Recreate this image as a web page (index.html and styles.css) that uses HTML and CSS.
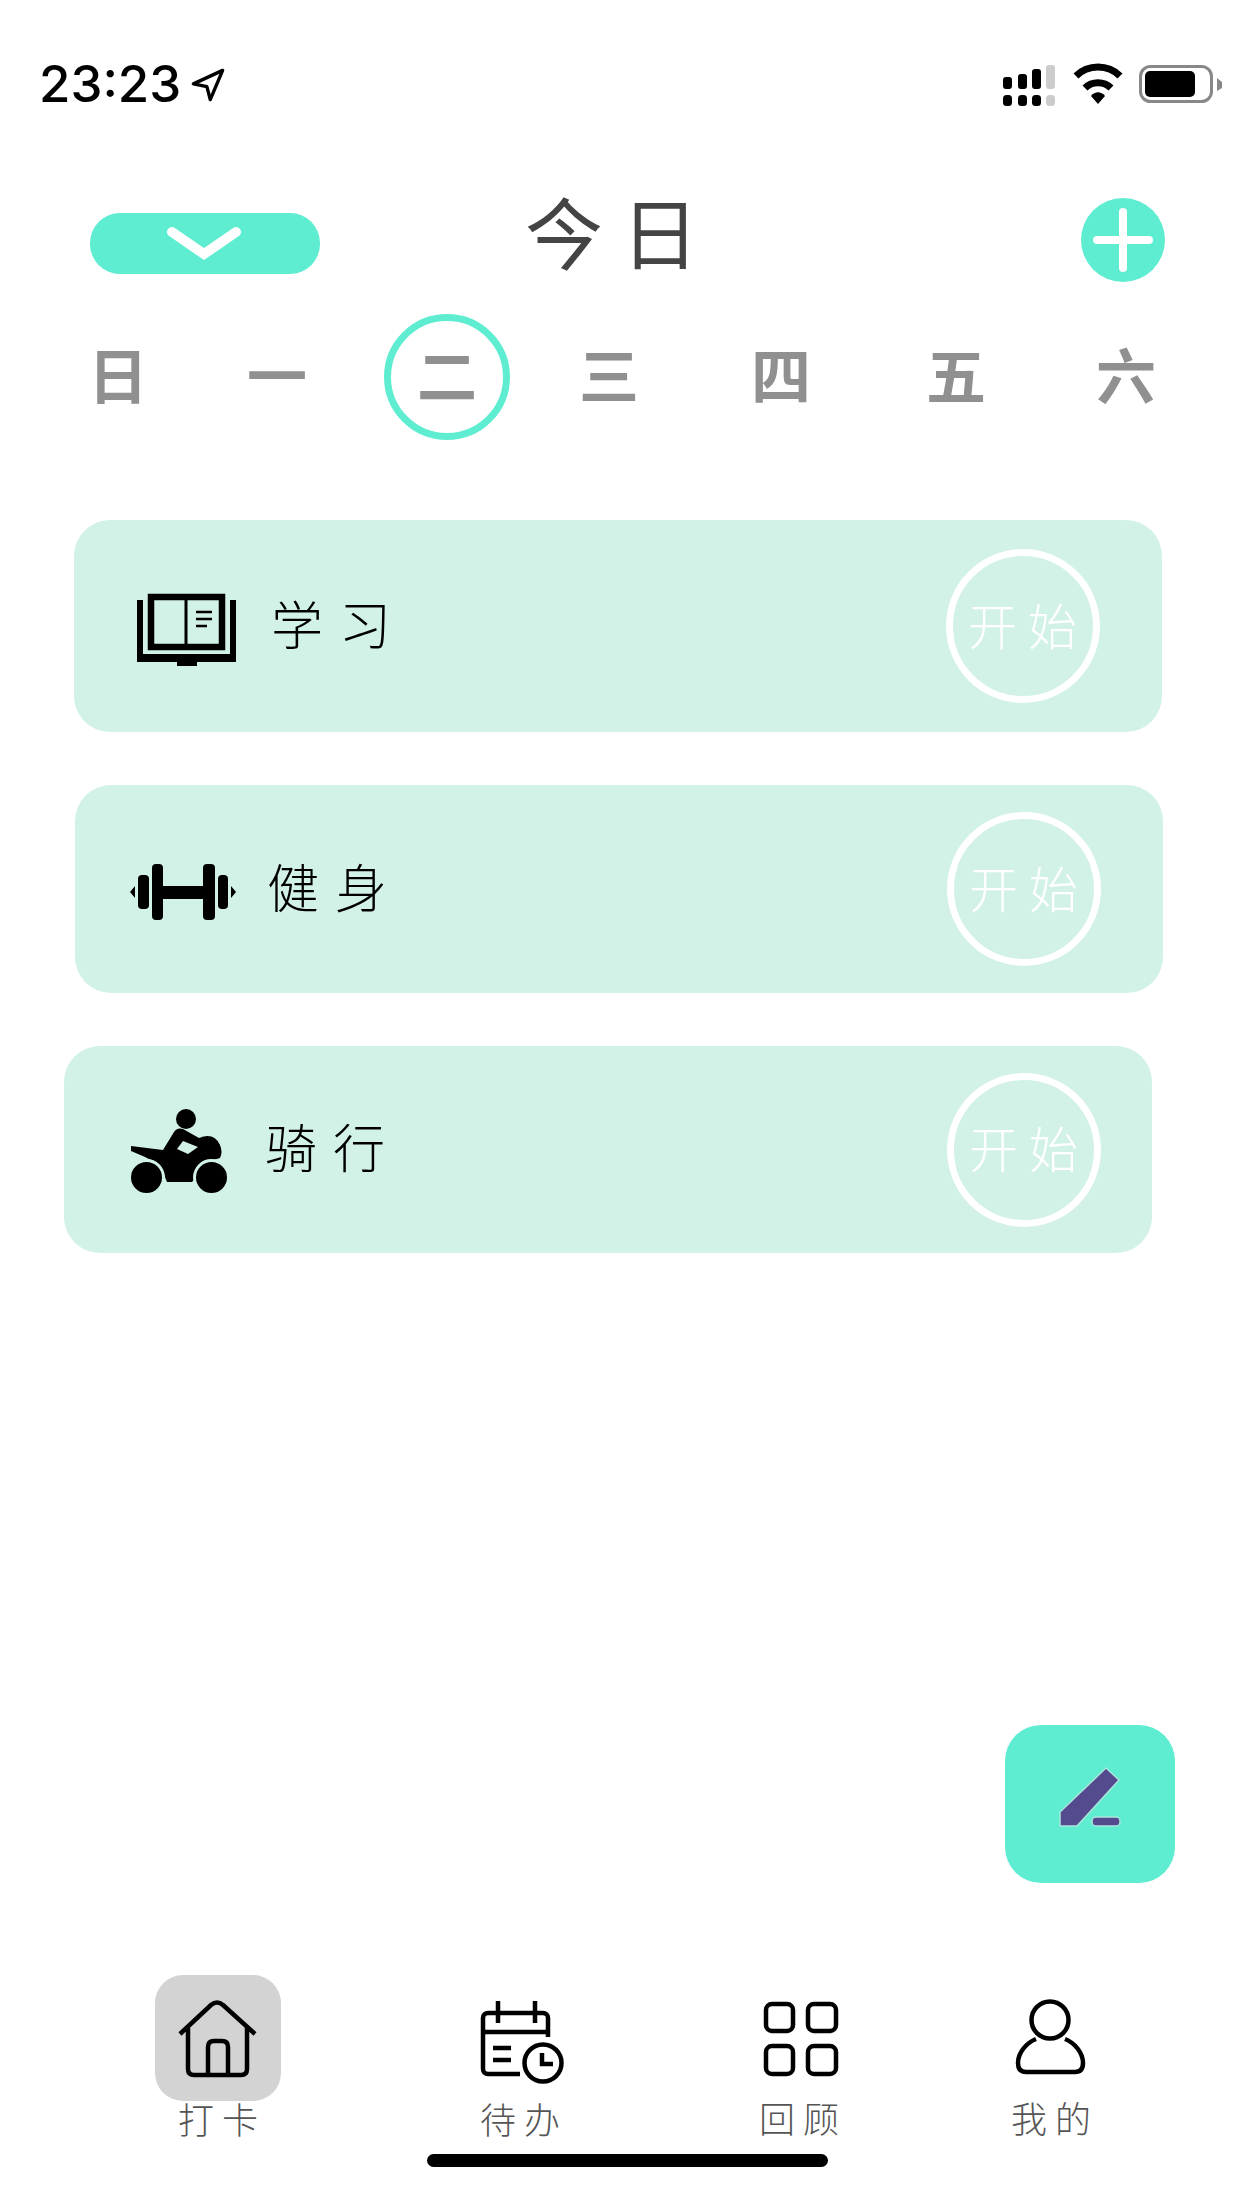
FILE: index.html
```html
<!DOCTYPE html>
<html lang="zh-CN">
<head>
<meta charset="UTF-8">
<title>今日</title>
<link rel="stylesheet" href="styles.css">
</head>
<body>
    <div class="phone">
        <div class="status-bar">
            <span class="time">23:23</span>
            <svg class="loc-arrow" width="36" height="36" viewBox="0 0 32 32">
                <path d="M29 3 L3 15 L15 17.5 L18 29 Z" fill="none" stroke="#000" stroke-width="3" stroke-linejoin="round"/>
            </svg>
            <svg class="status-icons" width="225" height="44" viewBox="0 0 225 44">
                <!-- signal -->
                <rect x="3" y="14" width="9" height="12" rx="3"/>
                <rect x="18" y="11" width="9" height="15" rx="3"/>
                <rect x="32" y="6" width="9" height="20" rx="3"/>
                <rect x="46" y="2" width="9" height="24" rx="3" fill="#ccc"/>
                <rect x="3" y="32" width="9" height="11" rx="3.5"/>
                <rect x="18" y="32" width="9" height="11" rx="3.5"/>
                <rect x="32" y="32" width="9" height="11" rx="3.5"/>
                <rect x="46" y="32" width="9" height="11" rx="3.5" fill="#ccc"/>
                <!-- wifi -->
                <path d="M76 13 C88 1 108 1 120 13" fill="none" stroke="#000" stroke-width="7"/>
                <path d="M85 25 C92 18 104 18 111 25" fill="none" stroke="#000" stroke-width="7"/>
                <path d="M91 33 C95 28 101 28 105 33 L98 41 Z"/>
                <!-- battery -->
                <rect x="140.5" y="3.5" width="71" height="35" rx="10" fill="none" stroke="#888" stroke-width="3"/>
                <rect x="145" y="8" width="50" height="26" rx="5"/>
                <path d="M217 15 L222 19 V25 L217 28 Z" fill="#888"/>
            </svg>
        </div>

        <div class="header">
            <div class="pill">
                <svg width="74" height="36" viewBox="0 0 74 36">
                    <path d="M5 6 L37 28 L69 6" fill="none" stroke="#fff" stroke-width="10" stroke-linecap="round" stroke-linejoin="miter"/>
                </svg>
            </div>
            <h1 class="title">今日</h1>
            <div class="add-btn">
                <svg width="84" height="84" viewBox="0 0 84 84">
                    <path d="M42 14 V70 M16 42 H68" stroke="#fff" stroke-width="8" stroke-linecap="round"/>
                </svg>
            </div>
        </div>

        <div class="week">
            <div class="day">日</div>
            <div class="day">一</div>
            <div class="day today">二</div>
            <div class="day">三</div>
            <div class="day">四</div>
            <div class="day">五</div>
            <div class="day">六</div>
        </div>

        <div class="main">
            <div class="card card-study">
                <svg class="card-icon" width="106" height="80" viewBox="0 0 106 80">
                    <path d="M2 11 H8 V65 H95 V11 H101 V73 H62 V77 H42 V73 H2 Z"/>
                    <rect x="16" y="8" width="71" height="50" fill="none" stroke="#000" stroke-width="6.5"/>
                    <path d="M51 7 V58" stroke="#000" stroke-width="3"/>
                    <path d="M61 23 H77 M61 30 H77 M61 37 H72" stroke="#000" stroke-width="2.5"/>
                </svg>
                <span class="card-name">学习</span>
                <div class="start">开始</div>
            </div>
            <div class="card card-gym">
                <svg class="card-icon" width="106" height="64" viewBox="0 0 106 64">
                    <rect x="22" y="4" width="11" height="56" rx="4"/>
                    <rect x="73" y="4" width="12" height="56" rx="4"/>
                    <rect x="8" y="15" width="11" height="34" rx="4"/>
                    <rect x="88" y="15" width="10" height="34" rx="4"/>
                    <rect x="33" y="26" width="40" height="13"/>
                    <path d="M5 26 V38 L0 32 Z M101 26 V38 L106 32 Z"/>
                </svg>
                <span class="card-name">健身</span>
                <div class="start">开始</div>
            </div>
            <div class="card card-ride">
                <svg class="card-icon" width="98" height="90" viewBox="0 0 98 90">
                    <circle cx="56" cy="14" r="10"/>
                    <path fill-rule="evenodd" d="M1 41 L33 45 L44 27 Q47 22 53 24 L69 33 Q84 27 90 40 Q93 47 90 53 L80 56 L62 77 H37 L30 60 L15 52 L1 46 Z M47 44 L53 36 L68 42 L58 49 Z"/>
                    <circle cx="16.5" cy="72.5" r="17" stroke="#d2f1e7" stroke-width="3"/>
                    <circle cx="81.5" cy="72.5" r="17" stroke="#d2f1e7" stroke-width="3"/>
                </svg>
                <span class="card-name">骑行</span>
                <div class="start">开始</div>
            </div>

            <div class="fab">
                <svg width="170" height="158" viewBox="0 0 170 158">
                    <path d="M101 43 L114 55 L72 101 H55 V87 Z" fill="#544a8e" stroke="#a9e6dc" stroke-width="1.5"/>
                    <rect x="87" y="92" width="28" height="9" rx="4" fill="#544a8e" stroke="#a9e6dc" stroke-width="1.5"/>
                </svg>
            </div>
        </div>

        <div class="tabbar">
            <div class="tab tab-home">
                <svg class="tab-icon" width="126" height="126" viewBox="0 0 126 126">
                    <path d="M25 59 L56 30 Q62 25 68 30 L100 59 M33 52 V94 Q33 100 39 100 H86 Q92 100 92 94 V52 M53 100 V72 Q53 66 59 66 H67 Q73 66 73 72 V100"/>
                </svg>
                <span class="tab-label">打卡</span>
            </div>
            <div class="tab tab-todo">
                <svg class="tab-icon" width="126" height="126" viewBox="0 0 126 126">
                    <path d="M91 62 V43 a5 5 0 0 0 -5 -5 H31 a5 5 0 0 0 -5 5 V94 a5 5 0 0 0 5 5 H63 M41 26 V48 M78 26 V48 M26 57 H91 M36 73 H54 M36 85 H54"/>
                    <circle cx="86" cy="88" r="18.5"/>
                    <path d="M85 78 V89 H96"/>
                </svg>
                <span class="tab-label">待办</span>
            </div>
            <div class="tab tab-review">
                <svg class="tab-icon" width="126" height="126" viewBox="0 0 126 126">
                    <rect x="30" y="29" width="27" height="27" rx="6"/>
                    <rect x="72" y="29" width="28" height="27" rx="6"/>
                    <rect x="30" y="71" width="27" height="28" rx="6"/>
                    <rect x="72" y="71" width="28" height="28" rx="6"/>
                </svg>
                <span class="tab-label">回顾</span>
            </div>
            <div class="tab tab-mine">
                <svg class="tab-icon" width="126" height="126" viewBox="0 0 126 126">
                    <circle cx="62" cy="45" r="18.5"/>
                    <path d="M48 64 C38 68 30 78 30 88 C30 94 33 97 38 97 H87 C92 97 95 94 95 88 C95 78 87 68 77 64"/>
                </svg>
                <span class="tab-label">我的</span>
            </div>
        </div>
        <div class="home-bar"></div>
    </div>
</body>
</html>
```

FILE: styles.css
```css
body {
    margin: 0;
    padding: 0;
    background: #fff;
    font-family: "Noto Sans CJK SC", "Noto Sans", sans-serif;
}
.phone {
    width: 1242px;
    height: 2208px;
    display: flex;
    flex-direction: column;
    overflow: hidden;
}

/* status bar */
.status-bar {
    height: 170px;
    display: flex;
    align-items: center;
    padding: 0 17px 0 39px;
    box-sizing: border-box;
}
.time {
    font-family: Inter, Roboto, sans-serif;
    font-size: 51px;
    font-weight: 500;
    line-height: 60px;
    margin-bottom: 2px;
    color: #000;
}
.loc-arrow {
    margin-left: 9px;
}
.status-icons {
    margin-left: auto;
}

/* title row */
.header {
    height: 143px;
    display: flex;
    align-items: flex-start;
    padding: 0 77px 0 90px;
    box-sizing: border-box;
}
.pill {
    width: 230px;
    height: 61px;
    margin-top: 43px;
    border-radius: 30px;
    background: #5eedd0;
    display: flex;
    align-items: center;
    justify-content: center;
}
.pill svg {
    margin-right: 3px;
}
.title {
    margin: 15px 0 0 205px;
    font-size: 78px;
    font-weight: 400;
    line-height: 90px;
    letter-spacing: 18px;
    color: #444;
}
.add-btn {
    width: 84px;
    height: 84px;
    margin: 28px 0 0 auto;
    border-radius: 50%;
    background: #5eedd0;
}

/* week days */
.week {
    height: 126px;
    display: flex;
    padding: 1px 0 0 55px;
}
.day {
    width: 126px;
    height: 126px;
    box-sizing: border-box;
    display: flex;
    align-items: center;
    justify-content: center;
    padding-bottom: 10px;
    font-size: 60px;
    font-weight: 600;
    color: #909090;
}
.day:nth-child(2) { margin-left: 33px; }
.day:nth-child(3) { margin-left: 44px; }
.day:nth-child(4) { margin-left: 36px; }
.day:nth-child(5) { margin-left: 46px; }
.day:nth-child(6) { margin-left: 49px; }
.day:nth-child(7) { margin-left: 44px; }
.today {
    border: 7px solid #5eedd0;
    border-radius: 50%;
}

/* cards */
.main {
    flex: 1;
    display: flex;
    flex-direction: column;
    padding-top: 80px;
}
.card {
    width: 1088px;
    display: flex;
    align-items: center;
    background: #d2f1e7;
    border-radius: 36px;
    box-sizing: border-box;
}
.card-study {
    height: 212px;
    margin-left: 74px;
    padding: 0 62px 0 61px;
}
.card-gym {
    height: 208px;
    margin: 53px 0 0 75px;
    padding: 0 62px 0 55px;
}
.card-ride {
    height: 207px;
    margin: 53px 0 0 64px;
    padding: 0 51px 0 66px;
}
.card-icon {
    flex-shrink: 0;
}
.card-study .card-icon { margin: 6px 30px 0 0; }
.card-gym .card-icon { margin: 6px 31px 0 0; }
.card-ride .card-icon { margin-right: 37px; }
.card-name {
    margin-bottom: 8px;
    font-size: 52px;
    font-weight: 300;
    letter-spacing: 16px;
    color: #000;
}
.start {
    width: 154px;
    height: 154px;
    margin-left: auto;
    box-sizing: border-box;
    border: 7px solid #fff;
    border-radius: 50%;
    display: flex;
    align-items: center;
    justify-content: center;
    padding: 0 0 6px 10px;
    font-size: 49px;
    font-weight: 300;
    letter-spacing: 11px;
    color: #fff;
}
.fab {
    width: 170px;
    height: 158px;
    margin: 472px 0 0 1005px;
    background: #5eedd0;
    border-radius: 36px;
}

/* bottom tabs */
.tabbar {
    display: flex;
    padding-left: 155px;
}
.tab {
    width: 126px;
    height: 167px;
    display: flex;
    flex-direction: column;
    align-items: center;
}
.tab-todo { margin-left: 176px; }
.tab-review { margin-left: 153px; }
.tab-mine { margin-left: 126px; }
.tab-home .tab-icon {
    background: #d3d3d3;
    border-radius: 28px;
}
.tab-icon {
    display: block;
    flex-shrink: 0;
    fill: none;
    stroke: #000;
    stroke-width: 4.5;
}
.tab-label {
    width: 126px;
    margin-top: -3px;
    font-size: 36px;
    font-weight: 300;
    line-height: 40px;
    letter-spacing: 8px;
    padding-left: 8px;
    box-sizing: border-box;
    text-align: center;
    white-space: nowrap;
    color: #555;
}
.tab-review .tab-label,
.tab-mine .tab-label {
    margin-top: -4px;
}
.home-bar {
    width: 401px;
    height: 13px;
    margin: 12px 0 41px 427px;
    border-radius: 7px;
    background: #000;
}
```
